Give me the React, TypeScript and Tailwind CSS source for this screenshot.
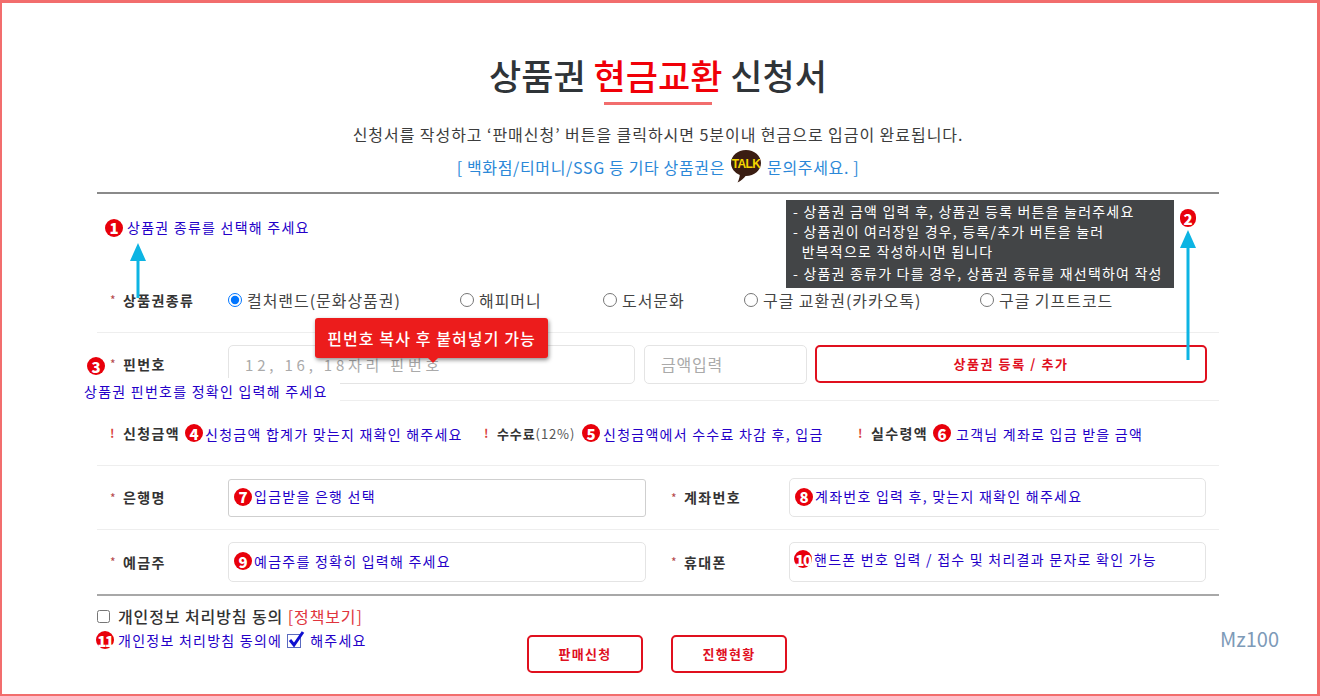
const font = { fontFamily: '"Noto Sans CJK KR", "Noto Sans", sans-serif' }

function Badge({ n, className = '' }: { n: number; className?: string }) {
  return (
    <span className={`inline-flex items-center justify-center w-[18px] h-[18px] rounded-full bg-[#e8000b] text-white text-[15px] font-black leading-none shrink-0 ${n > 9 ? 'tracking-[-1.5px]' : ''} ${className}`}>
      {n}
    </span>
  )
}

function Note({ children }: { children: React.ReactNode }) {
  return <span className="text-[14px] tracking-[1.25px] text-[#2400c8] whitespace-nowrap">{children}</span>
}

function Label({ mark = '*', children, className = '' }: { mark?: string; children: React.ReactNode; className?: string }) {
  return (
    <span className={`flex items-center whitespace-nowrap shrink-0 ${className}`}>
      <span className={`w-[13px] text-[12px] ${mark === '!' ? 'font-bold text-[#d9403a]' : 'text-[#b5484b]'}`}>{mark}</span>
      <span className="text-[14px] font-bold text-[#333] tracking-[1.4px]">{children}</span>
    </span>
  )
}

function Arrow({ className, height }: { className: string; height: number }) {
  return (
    <svg className={`absolute ${className}`} width="16" height={height} viewBox={`0 0 16 ${height}`}>
      <path d={`M8 0 L16 18 H9.5 V${height} H6.5 V18 H0 Z`} fill="#0db4e3" />
    </svg>
  )
}

function Kakao() {
  return (
    <svg className="mx-[5px] shrink-0" width="32" height="36" viewBox="0 0 32 36">
      <path d="M16 1C7.7 1 1 6.8 1 14c0 5.3 3.6 9.8 8.8 11.9-.2 2.7-1.2 5.5-2.3 7.6 3.4-1.6 6.400-4 8.100-6.500h.4c8.300 0 15-5.800 15-13S24.300 1 16 1z" fill="#3a1d12" />
      <text x="16" y="18.500" textAnchor="middle" fontSize="12" fontWeight="700" fill="#f5d600" fontFamily='"Liberation Sans", sans-serif' letterSpacing="-0.7">TALK</text>
    </svg>
  )
}

const kinds = ['컬처랜드(문화상품권)', '해피머니', '도서문화', '구글 교환권(카카오톡)', '구글 기프트코드']

export default function App() {
  return (
    <div style={font} className="relative w-[1320px] h-[696px] overflow-hidden bg-white border-t-[3px] border-b-[2px] border-l-[2px] border-r-[3px] border-[#f26d6d] text-[#333]">
      <div className="relative ml-[95px] w-[1122px] pt-[49px]">
        <h1 className="text-center text-[35px] leading-[46px] font-medium text-[#2f3438]">
          상품권 <span className="text-[#f00008]">현금교환</span> 신청서
        </h1>
        <div className="mt-[4px] ml-[507px] w-[108px] h-[3px] bg-[#f26d6d]" />
        <p className="mt-[18px] text-center text-[16px] leading-[22px] tracking-[0.95px] text-[#3c3c3c]">
          신청서를 작성하고 ‘판매신청’ 버튼을 클릭하시면 5분이내 현금으로 입금이 완료됩니다.
        </p>
        <div className="mt-[4px] h-[36px] flex items-center justify-center text-[16px] tracking-[0.65px] text-[#2b88d8]">
          [ 백화점/티머니/SSG 등 기타 상품권은 <Kakao /> 문의주세요. ]
        </div>
        <div className="mt-[7px] h-[2px] bg-[#8a8a8a]" />

        <div className="h-[139px] flex flex-col justify-between border-b border-[#eeeeee]">
          <div className="mt-[23px] ml-[8px] flex items-center gap-[4px]">
            <Badge n={1} />
            <Note>상품권 종류를 선택해 주세요</Note>
          </div>
          <div className="mb-[20px] flex items-center">
            <Label className="ml-[13px] w-[118px]">상품권종류</Label>
            <div className="grid grid-cols-[232px_143px_141px_236px_1fr] flex-1 text-[16px] text-[#444]">
              {kinds.map((k, i) => (
                <label key={k} className="flex items-center gap-[5px] whitespace-nowrap tracking-[0.95px]">
                  <input type="radio" name="kind" defaultChecked={i === 0} className="w-[14px] h-[14px] accent-[#0075ff]" />
                  {k}
                </label>
              ))}
            </div>
          </div>
        </div>

        <div className="h-[68px] pb-[5px] flex items-center border-b border-[#eeeeee]">
          <Label className="ml-[13px] w-[118px]">핀번호</Label>
          <input placeholder="12, 16, 18자리 핀번호" className="w-[407px] h-[39px] px-[16px] border border-[#e4e4e4] rounded-[5px] text-[15px] tracking-[3.8px] placeholder:text-[#aaaaaa] outline-none" />
          <input placeholder="금액입력" className="ml-[9px] w-[163px] h-[39px] px-[16px] border border-[#e4e4e4] rounded-[5px] text-[16px] tracking-[0.8px] placeholder:text-[#aaaaaa] outline-none" />
          <button className="ml-[8px] w-[392px] h-[38px] border-2 border-[#e0101e] rounded-[5px] bg-white text-[13px] font-bold tracking-[1.6px] text-[#e0101e]">상품권 등록 / 추가</button>
        </div>

        <div className="h-[65px] flex items-center border-b border-[#eeeeee]">
          <Label mark="!" className="ml-[13px] w-[75px]">신청금액</Label>
          <Badge n={4} />
          <span className="ml-[2px] w-[279px] shrink-0"><Note>신청금액 합계가 맞는지 재확인 해주세요</Note></span>
          <Label mark="!" className="w-[98px]">
            <span className="text-[13px] tracking-[0.9px]">수수료<span className="font-normal text-[#555]">(12%)</span></span>
          </Label>
          <Badge n={5} />
          <span className="ml-[3px] w-[255px] shrink-0"><Note>신청금액에서 수수료 차감 후, 입금</Note></span>
          <Label mark="!" className="w-[75px]">실수령액</Label>
          <Badge n={6} />
          <span className="ml-[5px]"><Note>고객님 계좌로 입금 받을 금액</Note></span>
        </div>

        <div className="h-[64px] flex items-center border-b border-[#eeeeee]">
          <Label className="ml-[13px] w-[118px]">은행명</Label>
          <div className="w-[418px] h-[38px] pl-[5px] pb-[2px] flex items-center gap-[2px] border border-[#cfcfcf] rounded-[3px]">
            <Badge n={7} /><Note>입금받을 은행 선택</Note>
          </div>
          <Label className="ml-[25px] w-[118px]">계좌번호</Label>
          <div className="w-[417px] h-[39px] pl-[5px] pb-[2px] flex items-center gap-[2px] border border-[#e4e4e4] rounded-[5px]">
            <Badge n={8} /><Note>계좌번호 입력 후, 맞는지 재확인 해주세요</Note>
          </div>
        </div>

        <div className="h-[66px] flex items-center border-b-2 border-[#a8a8a8]">
          <Label className="ml-[13px] w-[118px]">예금주</Label>
          <div className="w-[418px] h-[40px] pl-[5px] pb-[2px] flex items-center gap-[2px] border border-[#e4e4e4] rounded-[5px]">
            <Badge n={9} /><Note>예금주를 정확히 입력해 주세요</Note>
          </div>
          <Label className="ml-[25px] w-[118px]">휴대폰</Label>
          <div className="w-[417px] h-[40px] pl-[4px] pb-[6px] flex items-center gap-[2px] border border-[#e4e4e4] rounded-[5px]">
            <Badge n={10} /><Note>핸드폰 번호 입력 / 접수 및 처리결과 문자로 확인 가능</Note>
          </div>
        </div>

        <div className="flex items-start">
          <div className="w-[430px] shrink-0">
            <label className="mt-[9px] h-[22px] flex items-center gap-[8px] whitespace-nowrap">
              <input type="checkbox" className="w-[13px] h-[13px]" />
              <span className="text-[16px] font-medium text-[#333] tracking-[0.9px]">개인정보 처리방침 동의 <span className="font-normal text-[#e0343c]">[정책보기]</span></span>
            </label>
            <div className="mt-[1px] -ml-[1px] h-[24px] flex items-center gap-[4px] whitespace-nowrap">
              <Badge n={11} />
              <Note>개인정보 처리방침 동의에</Note>
              <svg className="mx-[1px]" width="18" height="18" viewBox="0 0 18 18">
                <rect x="0.5" y="3.500" width="13" height="13" fill="white" stroke="#5a6ac0" />
                <path d="M3 9 L7 14 L16 1" fill="none" stroke="#1010d0" strokeWidth="3" />
              </svg>
              <Note>해주세요</Note>
            </div>
          </div>
          <div className="mt-[39px] flex gap-[28px] shrink-0">
            {['판매신청', '진행현황'].map((t) => (
              <button key={t} className="w-[116px] h-[38px] border-2 border-[#e0101e] rounded-[5px] bg-white text-[13px] font-bold tracking-[1.3px] text-[#e0101e]">{t}</button>
            ))}
          </div>
          <span className="ml-[433px] mt-[31px] shrink-0 text-[20px] leading-[24px] text-[#7d9ab8]">Mz100</span>
        </div>
      </div>

      {/* overlays */}
      <Arrow className="left-[128px] top-[240px]" height={55} />
      <Arrow className="left-[1178px] top-[227px]" height={130} />
      <Badge n={2} className="absolute left-[1178px] top-[206px] w-[16px]!" />

      <div className="absolute left-[784px] top-[197px] w-[388px] h-[88px] bg-[#434547] pl-[7px] pt-[1px] text-[14px] leading-[20px] tracking-[1.2px] text-white whitespace-pre">
        <div>- 상품권 금액 입력 후, 상품권 등록 버튼을 눌러주세요</div>
        <div>- 상품권이 여러장일 경우, 등록/추가 버튼을 눌러</div>
        <div>  반복적으로 작성하시면 됩니다</div>
        <div className="mt-[2px]">- 상품권 종류가 다를 경우, 상품권 종류를 재선택하여 작성</div>
      </div>

      <div className="absolute left-[313px] top-[315px] w-[233px] h-[40px] flex items-center justify-center rounded-[3px] bg-[#ec1c1c] text-[16px] font-medium tracking-[1.1px] text-white shadow-[1px_2px_4px_rgba(0,0,0,0.45)]">
        핀번호 복사 후 붙혀넣기 가능
        <span className="absolute left-[112px] top-[39px] border-x-[6px] border-x-transparent border-t-[6px] border-t-[#ec1c1c]" />
      </div>

      <Badge n={3} className="absolute left-[85px] top-[354px]" />
      <div className="absolute left-[78px] top-[375px] w-[260px] h-[26px] bg-white pl-[4px] flex items-center">
        <Note>상품권 핀번호를 정확인 입력해 주세요</Note>
      </div>
    </div>
  )
}
